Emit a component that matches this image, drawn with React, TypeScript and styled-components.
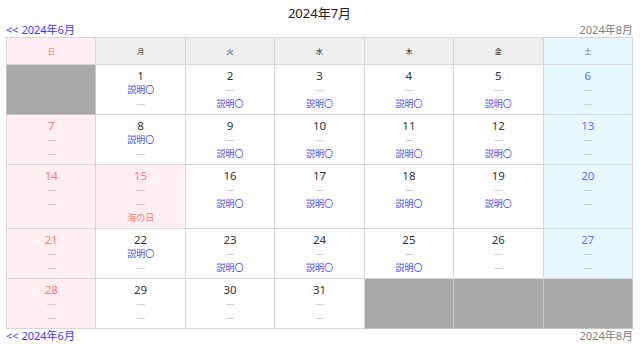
import styled, { createGlobalStyle } from 'styled-components'

const Global = createGlobalStyle`
  html, body {
    margin: 0;
    padding: 0;
    background: #fff;
  }
  body {
    font-family: "Noto Sans", "Noto Sans CJK JP", sans-serif;
    color: #333;
  }
`

const Page = styled.div`
  padding: 3px 7px 0 6px;
`

const Title = styled.div`
  text-align: center;
  font-size: 13px;
  line-height: 20px;
  color: #222;
`

const Nav = styled.div`
  display: flex;
  justify-content: space-between;
  font-size: 11px;
  line-height: 14px;
  height: 14px;
`

const Prev = styled.a`
  color: #3b3bf5;
  text-decoration: none;
`

const Next = styled.span`
  color: #808080;
`

const Table = styled.table`
  width: 100%;
  table-layout: fixed;
  border-collapse: collapse;
  border: 1px solid #d8d8d8;
`

type Kind = 'sun' | 'sat' | 'wd'

const Head = styled.th<{ $kind: Kind }>`
  height: 26px;
  padding: 0;
  font-size: 7px;
  font-weight: normal;
  border: 1px solid #d8d8d8;
  background: ${p => (p.$kind === 'sun' ? '#ffeff3' : p.$kind === 'sat' ? '#e6f8fe' : '#efefef')};
  color: ${p => (p.$kind === 'sun' ? '#ff5f6a' : p.$kind === 'sat' ? '#5a5aff' : '#222')};
`

const Cell = styled.td<{ $kind: Kind; $empty?: boolean }>`
  border: 1px solid ${p => (p.$empty ? '#c4c4c4' : '#d8d8d8')};
  padding: 4px 0 3px;
  text-align: center;
  vertical-align: top;
  background: ${p =>
    p.$empty ? '#a9a9a9' : p.$kind === 'sun' ? '#ffeff3' : p.$kind === 'sat' ? '#e6f8fe' : '#fff'};
`

const Line = styled.div`
  height: 14px;
  line-height: 14px;
  font-size: 9px;
  overflow: hidden;
  white-space: nowrap;
`

const Num = styled(Line)<{ $kind: Kind }>`
  font-size: 11.5px;
  color: ${p => (p.$kind === 'sun' ? '#ff7b73' : p.$kind === 'sat' ? '#6b6bff' : '#333')};
`

const Dash = styled(Line)`
  color: #b0b0b0;
`

const Desc = styled(Line)`
  color: #4a4af2;
`

const Holiday = styled(Line)`
  color: #ff7b73;
`

const weekdays = ['日', '月', '火', '水', '木', '金', '土']
const kindOf = (i: number): Kind => (i === 0 ? 'sun' : i === 6 ? 'sat' : 'wd')

const holidays: Record<number, string> = { 15: '海の日' }

function lines(day: number, dow: number): [string, string] {
  if (holidays[day] || dow === 0 || dow === 6 || day >= 26) return ['-', '-']
  if (dow === 1) return ['desc', '-']
  return ['-', 'desc']
}

function Entry({ v }: { v: string }) {
  return v === 'desc' ? <Desc>説明〇</Desc> : <Dash>—</Dash>
}

export default function App() {
  // July 2024 starts on Monday
  const first = 1
  const cells: (number | null)[] = []
  for (let i = 0; i < first; i++) cells.push(null)
  for (let d = 1; d <= 31; d++) cells.push(d)
  while (cells.length % 7) cells.push(null)
  const weeks: (number | null)[][] = []
  for (let i = 0; i < cells.length; i += 7) weeks.push(cells.slice(i, i + 7))

  return (
    <>
      <Global />
      <Page>
        <Title>2024年7月</Title>
        <Nav>
          <Prev href="#">&lt;&lt; 2024年6月</Prev>
          <Next>2024年8月</Next>
        </Nav>
        <Table>
          <thead>
            <tr>
              {weekdays.map((w, i) => (
                <Head key={w} $kind={kindOf(i)}>
                  {w}
                </Head>
              ))}
            </tr>
          </thead>
          <tbody>
            {weeks.map((week, wi) => (
              <tr key={wi}>
                {week.map((day, i) => {
                  const kind = kindOf(i)
                  if (day === null) return <Cell key={i} $kind={kind} $empty />
                  const hol = holidays[day]
                  const [a, b] = lines(day, i)
                  return (
                    <Cell key={i} $kind={hol ? 'sun' : kind}>
                      <Num $kind={hol ? 'sun' : kind}>{day}</Num>
                      <Entry v={a} />
                      <Entry v={b} />
                      {hol && <Holiday>{hol}</Holiday>}
                    </Cell>
                  )
                })}
              </tr>
            ))}
          </tbody>
        </Table>
        <Nav>
          <Prev href="#">&lt;&lt; 2024年6月</Prev>
          <Next>2024年8月</Next>
        </Nav>
      </Page>
    </>
  )
}
